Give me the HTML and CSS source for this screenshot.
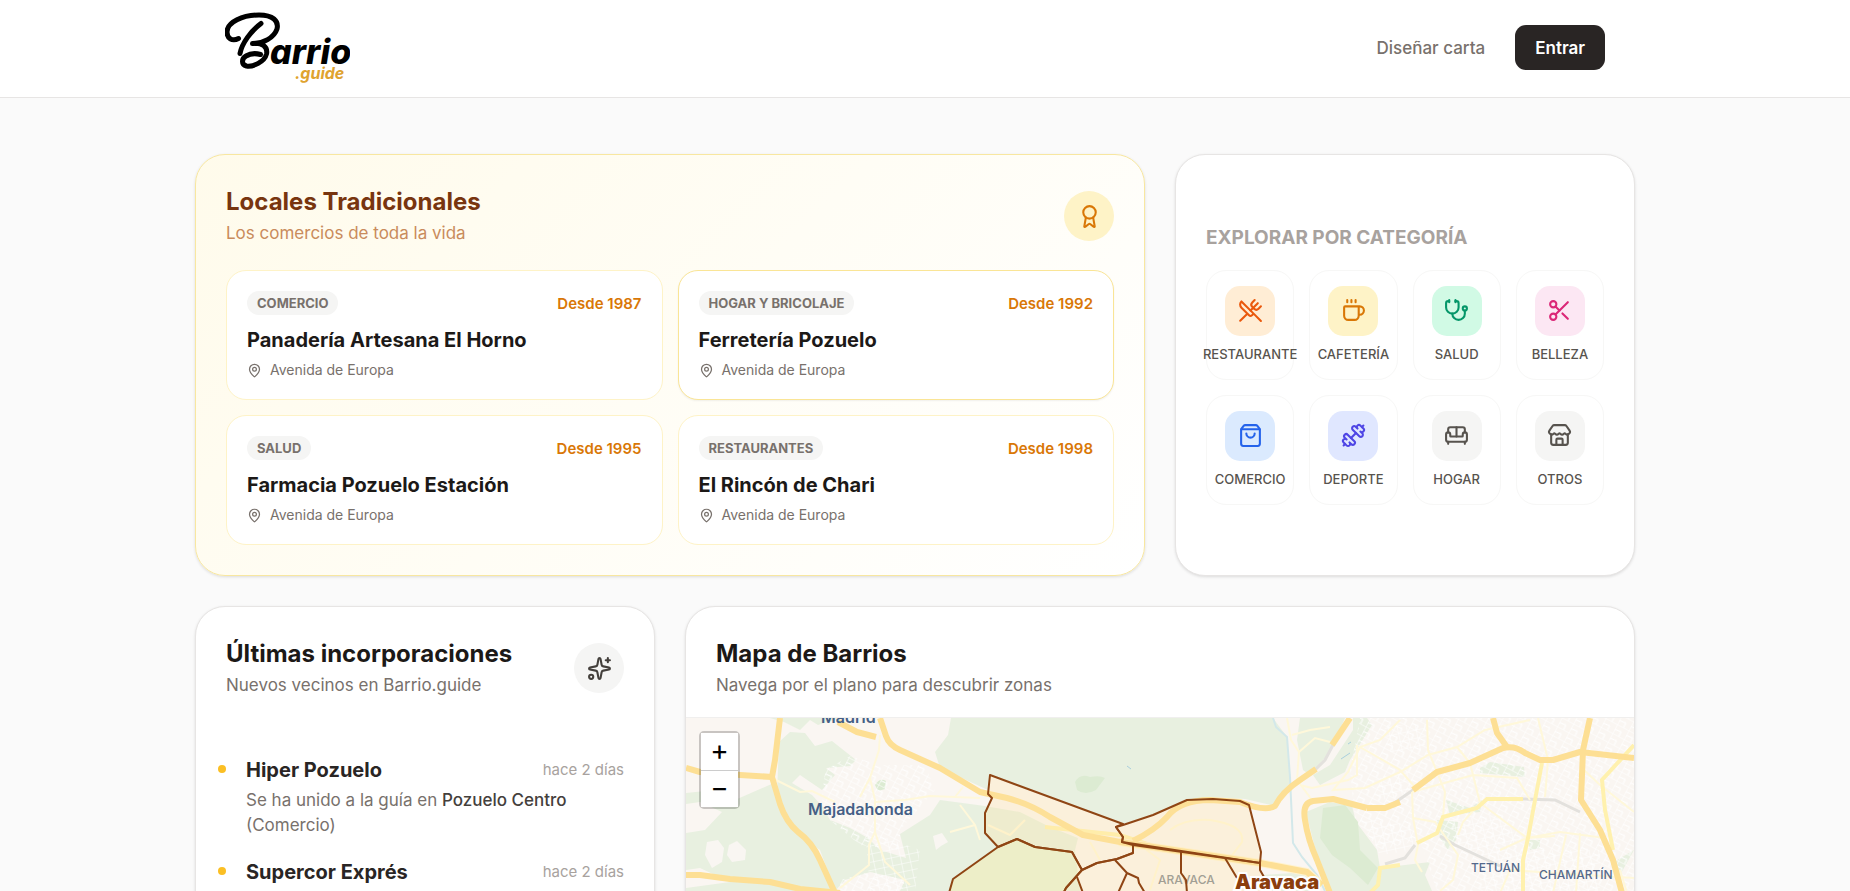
FILE: index.html
```html
<!DOCTYPE html>
<html lang="es">
<head>
<meta charset="utf-8">
<meta name="viewport" content="width=device-width, initial-scale=1">
<title>Barrio.guide</title>
<link rel="stylesheet" href="styles.css">
</head>
<body>
<svg class="sprite" aria-hidden="true">
  <symbol id="i-pin" viewBox="0 0 24 24"><path d="M20 10c0 4.993-5.539 10.193-7.399 11.799a1 1 0 0 1-1.202 0C9.539 20.193 4 14.993 4 10a8 8 0 0 1 16 0"/><circle cx="12" cy="10" r="3"/></symbol>
</svg>
<header class="site-header">
  <div class="header-inner">
    <a class="logo" href="#" aria-label="Barrio.guide">
      <svg width="125" height="75" viewBox="225 9 125 75">
        <g class="logo-mark">
          <path d="M238.500 37.500C232 41 227 37 227 31C227 21 243 14 259 14C273 14 279 20 277 28C274 37 263 42.500 252.500 42.500C262 41 268 46 266.500 53C264.500 61 253 66 246.500 65C241 63.500 241.500 57.500 246 55C251 52 257 52.500 260.500 53.500"/>
          <path d="M261 22.500C251 30 242 42 240 52.500"/>
        </g>
        <text class="logo-name" x="270" y="63">arrio</text>
        <text class="logo-tld" x="295" y="78">.guide</text>
      </svg>
    </a>
    <nav class="nav">
      <a class="nav-link" href="#">Diseñar carta</a>
      <button class="btn" type="button">Entrar</button>
    </nav>
  </div>
</header>
<div class="page">
<main class="main">
  <section class="card card-amber wide">
    <div class="card-head">
      <div>
        <h2>Locales Tradicionales</h2>
        <p class="sub">Los comercios de toda la vida</p>
      </div>
      <span class="round amber"><svg class="icon" viewBox="0 0 24 24"><path d="m15.477 12.89 1.515 8.526a.5.5 0 0 1-.81.47l-3.58-2.687a1 1 0 0 0-1.197 0l-3.586 2.686a.5.5 0 0 1-.81-.469l1.514-8.526"/><circle cx="12" cy="8" r="6"/></svg></span>
    </div>
    <div class="shops">
      <a class="shop" href="#">
        <span class="shop-top"><span class="tag">COMERCIO</span><span class="since">Desde 1987</span></span>
        <span class="shop-name">Panadería Artesana El Horno</span>
        <span class="place"><svg class="pin"><use href="#i-pin"/></svg>Avenida de Europa</span>
      </a>
      <a class="shop active" href="#">
        <span class="shop-top"><span class="tag">HOGAR Y BRICOLAJE</span><span class="since">Desde 1992</span></span>
        <span class="shop-name">Ferretería Pozuelo</span>
        <span class="place"><svg class="pin"><use href="#i-pin"/></svg>Avenida de Europa</span>
      </a>
      <a class="shop" href="#">
        <span class="shop-top"><span class="tag">SALUD</span><span class="since">Desde 1995</span></span>
        <span class="shop-name">Farmacia Pozuelo Estación</span>
        <span class="place"><svg class="pin"><use href="#i-pin"/></svg>Avenida de Europa</span>
      </a>
      <a class="shop" href="#">
        <span class="shop-top"><span class="tag">RESTAURANTES</span><span class="since">Desde 1998</span></span>
        <span class="shop-name">El Rincón de Chari</span>
        <span class="place"><svg class="pin"><use href="#i-pin"/></svg>Avenida de Europa</span>
      </a>
    </div>
  </section>

  <section class="card explore">
    <h3>EXPLORAR POR CATEGORÍA</h3>
    <div class="cats">
      <a class="cat" href="#"><span class="tile orange"><svg class="icon" viewBox="0 0 24 24"><path d="m16 2-2.300 2.300a3 3 0 0 0 0 4.200l1.800 1.800a3 3 0 0 0 4.200 0L22 8"/><path d="M15 15 3.300 3.300a4.200 4.200 0 0 0 0 6l7.300 7.300c.7.7 2 .7 2.800 0L15 15Zm0 0 7 7"/><path d="m2.100 21.800 6.400-6.300"/><path d="m19 5-7 7"/></svg></span>RESTAURANTE</a>
      <a class="cat" href="#"><span class="tile yellow"><svg class="icon" viewBox="0 0 24 24"><path d="M10 2v2"/><path d="M14 2v2"/><path d="M6 2v2"/><path d="M16 8a1 1 0 0 1 1 1v8a4 4 0 0 1-4 4H7a4 4 0 0 1-4-4V9a1 1 0 0 1 1-1h14a4 4 0 1 1 0 8h-1"/></svg></span>CAFETERÍA</a>
      <a class="cat" href="#"><span class="tile mint"><svg class="icon" viewBox="0 0 24 24"><path d="M11 2v2"/><path d="M5 2v2"/><path d="M5 3H4a2 2 0 0 0-2 2v4a6 6 0 0 0 12 0V5a2 2 0 0 0-2-2h-1"/><path d="M8 15a6 6 0 0 0 12 0v-3"/><circle cx="20" cy="10" r="2"/></svg></span>SALUD</a>
      <a class="cat" href="#"><span class="tile pink"><svg class="icon" viewBox="0 0 24 24"><circle cx="6" cy="6" r="3"/><path d="M8.120 8.120 12 12"/><path d="M20 4 8.120 15.880"/><circle cx="6" cy="18" r="3"/><path d="M14.800 14.800 20 20"/></svg></span>BELLEZA</a>
      <a class="cat" href="#"><span class="tile blue"><svg class="icon" viewBox="0 0 24 24"><path d="M16 10a4 4 0 0 1-8 0"/><path d="M3.103 6.034h17.794"/><path d="M3.400 5.467a2 2 0 0 0-.4 1.200V20a2 2 0 0 0 2 2h14a2 2 0 0 0 2-2V6.667a2 2 0 0 0-.4-1.200l-2-2.667A2 2 0 0 0 17 2H7a2 2 0 0 0-1.600.8z"/></svg></span>COMERCIO</a>
      <a class="cat" href="#"><span class="tile indigo"><svg class="icon" viewBox="0 0 24 24"><path d="M17.596 12.768a2 2 0 1 0 2.829-2.829l-1.768-1.767a2 2 0 0 0 2.828-2.829l-2.828-2.828a2 2 0 0 0-2.829 2.828l-1.767-1.768a2 2 0 1 0-2.829 2.829z"/><path d="m2.500 21.500 1.400-1.400"/><path d="m20.100 3.900 1.400-1.400"/><path d="M5.343 21.485a2 2 0 1 0 2.829-2.828l1.767 1.768a2 2 0 1 0 2.829-2.829l-6.364-6.364a2 2 0 1 0-2.829 2.829l1.768 1.767a2 2 0 0 0-2.828 2.829z"/><path d="m9.600 14.400 4.800-4.800"/></svg></span>DEPORTE</a>
      <a class="cat" href="#"><span class="tile stone"><svg class="icon" viewBox="0 0 24 24"><path d="M20 9V6a2 2 0 0 0-2-2H6a2 2 0 0 0-2 2v3"/><path d="M2 16a2 2 0 0 0 2 2h16a2 2 0 0 0 2-2v-5a2 2 0 0 0-4 0v1.500a.5.5 0 0 1-.5.5h-11a.5.5 0 0 1-.5-.5V11a2 2 0 0 0-4 0z"/><path d="M4 18v2"/><path d="M20 18v2"/><path d="M12 4v9"/></svg></span>HOGAR</a>
      <a class="cat" href="#"><span class="tile stone"><svg class="icon" viewBox="0 0 24 24"><path d="M15 21v-5a1 1 0 0 0-1-1h-4a1 1 0 0 0-1 1v5"/><path d="M17.774 10.310a1.120 1.120 0 0 0-1.549 0 2.500 2.500 0 0 1-3.451 0 1.120 1.120 0 0 0-1.548 0 2.500 2.500 0 0 1-3.452 0 1.120 1.120 0 0 0-1.549 0 2.500 2.500 0 0 1-3.770-3.248l2.889-4.184A2 2 0 0 1 7 2h10a2 2 0 0 1 1.653.873l2.895 4.192a2.500 2.500 0 0 1-3.774 3.244"/><path d="M4 10.950V19a2 2 0 0 0 2 2h12a2 2 0 0 0 2-2v-8.050"/></svg></span>OTROS</a>
    </div>
  </section>

  <section class="card">
    <div class="card-head">
      <div>
        <h2>Últimas incorporaciones</h2>
        <p class="sub">Nuevos vecinos en Barrio.guide</p>
      </div>
      <span class="round"><svg class="icon" viewBox="0 0 24 24"><path d="M11.017 2.814a1 1 0 0 1 1.966 0l1.051 5.558a2 2 0 0 0 1.594 1.594l5.558 1.051a1 1 0 0 1 0 1.966l-5.558 1.051a2 2 0 0 0-1.594 1.594l-1.051 5.558a1 1 0 0 1-1.966 0l-1.051-5.558a2 2 0 0 0-1.594-1.594l-5.558-1.051a1 1 0 0 1 0-1.966l5.558-1.051a2 2 0 0 0 1.594-1.594z"/><path d="M20 2v4"/><path d="M22 4h-4"/><circle cx="4" cy="20" r="2"/></svg></span>
    </div>
    <ul class="feed">
      <li>
        <div class="feed-top"><strong>Hiper Pozuelo</strong><time>hace 2 días</time></div>
        <p>Se ha unido a la guía en <b>Pozuelo Centro</b> (Comercio)</p>
      </li>
      <li>
        <div class="feed-top"><strong>Supercor Exprés</strong><time>hace 2 días</time></div>
      </li>
    </ul>
  </section>

  <section class="card map-card wide">
    <div class="map-head">
      <h2>Mapa de Barrios</h2>
      <p class="sub">Navega por el plano para descubrir zonas</p>
    </div>
    <div class="map">
      <svg class="map-art" viewBox="686 718 948 480" preserveAspectRatio="xMidYMin slice" role="img" aria-label="Mapa de Barrios">
        <defs>
          <pattern id="st-a" width="13" height="10" patternUnits="userSpaceOnUse" patternTransform="rotate(28)"><path class="street" d="M0 0H13M0 0V10M0 6L7 5V10"/></pattern>
          <pattern id="st-b" width="9" height="8" patternUnits="userSpaceOnUse" patternTransform="rotate(-12)"><path class="street" d="M0 0H9M0 0V8"/></pattern>
        </defs>
        <rect class="land" x="686" y="718" width="948" height="480"/>
        <g class="green">
          <path d="M951 718L948 735L935 752L940 768L988 790L990 775L1123 824L1153 815L1187 800L1213 797L1245 799L1275 806L1290 790V777L1287 737L1273 718Z"/>
          <path d="M779 742L790 732L805 733L815 746L832 741L856 760L850 766L826 768L835 775L822 790L800 775L792 783L812 795L822 806L830 820L850 828L868 838L880 850L906 858L900 834L930 815L940 800L985 806L1020 812L1050 827L1078 838L1075 850L1080 891H900L905 880L870 872L845 880L835 891L820 850L790 830L777 795Z"/>
          <path d="M686 793L715 790L735 800L776 782L790 825L812 845L833 891H686V888L730 882L700 868L686 870V833L705 830L722 812L700 802L686 804Z"/>
          <path d="M770 718H840L818 725L810 720L800 730L784 722Z"/>
          <path d="M1300 718H1345L1330 752L1310 775L1303 770L1297 740Z"/>
          <path d="M1353 730V718H1367L1372 725L1350 760L1345 772L1320 785L1313 775L1330 765Z"/>
          <path d="M1306 812L1330 802L1352 806L1356 822L1377 850L1380 868L1430 862L1425 875L1432 891H1330L1318 860Z"/>
          <path d="M1480 768L1490 762L1524 767L1525 777L1480 773Z"/>
          <path d="M1437 820L1458 822L1456 840L1448 850L1440 838Z"/>
          <path d="M1446 800L1470 808L1482 800L1480 812L1450 815Z"/>
          <path d="M1528 840H1540V848L1530 850Z"/>
          <path d="M1634 850L1614 862L1620 875Z"/>
          <path d="M1262 875L1307 872L1320 891H1268Z"/>
        </g>
        <g class="green-dark">
          <path d="M1075 782Q1080 773 1090 777Q1100 775 1105 778L1096 790Q1085 796 1077 790Z"/>
          <path d="M1323 808L1345 805L1358 822L1360 850L1378 868L1368 885L1350 868L1332 855L1320 838Z"/>
          <path d="M875 785Q880 777 886 781L885 789L878 791Z"/>
        </g>
        <g class="patch">
          <path d="M707 842L718 840L724 848L722 862L712 868L705 855Z"/>
          <path d="M729 845L737 841L746 850L745 860L732 862L727 855Z"/>
          <path d="M933 836L942 833L948 842L941 846L936 850Z"/>
        </g>
        <g fill="url(#st-a)">
          <path d="M825 770L850 756L880 765L925 765L935 790L900 830L900 850L860 845L830 820L822 800Z"/>
          <path d="M1360 718H1634V900H1440L1420 840L1380 850L1355 820L1350 770Z"/>
          <path d="M840 880L870 872L905 880L900 900H840Z"/>
        </g>
        <g fill="url(#st-b)">
          <path d="M865 830L920 850L915 891H870Z"/>
          <path d="M1360 818L1410 825L1415 850L1380 855Z"/>
          <path d="M1384 725H1425V750L1390 752Z"/>
          <path d="M1375 780L1410 770V795L1380 800Z"/>
          <path d="M1480 850H1600V893H1480Z"/>
          <path d="M1450 820L1500 815L1520 840L1500 850L1455 850Z"/>
        </g>
        <path class="river" d="M1273 718L1276 727L1287 737L1290 777L1293 843L1302 857L1317 875L1325 891"/>
        <path class="lake" d="M1341 759L1350 753M1348 744L1351 742M1127 766L1131 769"/>
        <g class="rail"><path d="M1313 772L1325 760L1333 745M1390 806L1413 790L1437 772M1523 799L1555 800L1580 812M1385 864L1405 858L1415 845M1440 836L1455 845L1500 866"/></g>
        <g class="minor">
          <path d="M880 735L879 750L870 778L875 800V832L869 845V865L840 888M870 778L860 797M875 802L905 800L930 796L980 798M963 787L955 797M875 832L885 862L910 885M770 777L800 792L812 791L835 802"/>
          <path d="M1287 718L1291 740L1299 752L1297 780L1312 800M1292 735L1310 730L1330 727M1299 752L1315 738L1330 742M1357 745V775L1348 780L1312 788L1300 785"/>
          <path d="M1400 720L1380 740L1360 747L1348 772L1333 790L1365 788L1400 772L1428 755L1457 747L1485 730L1530 720M1360 747L1400 770L1415 787M1427 720L1428 750L1437 772L1445 792L1443 817M1457 747L1470 763L1480 803L1527 838L1560 832L1605 838M1412 792L1473 775L1517 778L1530 800M1538 718L1548 760L1545 797M1412 792L1413 818L1435 822L1458 855L1453 880L1440 891M1413 818L1418 845L1415 860L1422 872M1480 803L1463 822L1458 835M1584 770L1600 785L1634 812M1566 835L1553 893M1580 833L1576 893M1500 850L1527 838L1555 836M1500 893L1510 870L1634 878M1627 893L1620 870"/>
          <path d="M960 805L975 825L980 840M975 825L950 832M1025 820L1010 835L988 825M1170 830Q1185 818 1210 820Q1245 825 1242 842L1230 858M1090 842L1100 860M1140 845L1160 860L1150 890"/>
        </g>
        <g class="mid">
          <path d="M1634 745L1602 780L1605 810L1613 850"/>
          <path d="M1542 763L1535 800L1528 838L1523 860V893"/>
          <path d="M1523 799H1487L1477 808L1443 817L1437 833L1417 843M1400 865L1380 868L1378 885L1370 893"/>
          <path d="M1045 827L1120 835L1150 845"/>
        </g>
        <g class="road-case"><path d="M1119 842L1260 863L1307 872L1322 885"/></g>
        <g class="road">
          <path d="M780 718L775 760L772 777L780 804Q786 822 798 832Q812 842 820 860L835 893"/>
          <path d="M686 768L700 772L740 775L772 777"/>
          <path d="M880 718L886 736Q889 745 900 750L940 768L980 792L1007 798Q1030 804 1050 817L1083 835L1120 842L1260 863L1307 872L1322 885"/>
          <path d="M838 722L857 732L876 737"/>
          <path d="M686 875H700L730 879L770 882L800 889L840 893"/>
          <path d="M1133 841Q1155 830 1167 817Q1180 800 1210 800L1240 802Q1265 812 1275 806Q1282 792 1300 780L1316 769M1332 745L1350 718"/>
          <path d="M1367 808L1333 799L1313 801Q1302 803 1305 820Q1308 840 1317 860L1330 893"/>
          <path d="M1367 808L1385 808L1400 802M1413 790L1437 772L1470 763L1503 748Q1515 745 1525 753L1540 760H1553L1580 752L1634 758"/>
          <path d="M1493 718L1497 733L1507 747"/>
          <path d="M1590 718L1583 750L1581 800L1600 830L1613 860L1622 893"/>
        </g>
        <text class="town" x="808" y="815">Majadahonda</text>
        <text class="town" x="821" y="723">Madrid</text>
        <text class="district" x="1471" y="872">TETUÁN</text>
        <text class="district" x="1539" y="879">CHAMARTÍN</text>
        <text class="district soft" x="1158" y="884">ARAVACA</text>
        <g class="zone">
          <path d="M990 775L1123 824L1116 827L1123 837L1122 842L1133 845V853L1117 859L1097 863L1082 870L1072 852L1035 847L1017 839L998 847L985 833V813L992 798L988 794Z"/>
          <path class="olive" d="M998 847L953 879L947 900H1060L1066 888L1082 870L1072 852L1035 847L1017 839Z"/>
          <path d="M1123 825L1153 815L1187 800L1213 799L1240 801L1249 805L1261 852L1260 863L1122 842L1123 837L1116 827Z"/>
          <path d="M1133 845L1260 863V870L1268 884L1270 900H1060L1066 888L1082 870L1097 863L1117 859L1133 853Z"/>
          <path class="line" d="M1181 852V873L1186 880L1187 893M1225 858L1237 878M1115 860L1127 873L1118 893M1127 873L1138 878L1139 883L1145 893M1077 877L1083 893"/>
        </g>
        <text class="zone-name" x="1235" y="889">Aravaca</text>
      </svg>
      <div class="zoom">
        <button type="button" aria-label="Acercar">+</button>
        <button type="button" aria-label="Alejar">−</button>
      </div>
    </div>
  </section>
</main>
</div>
</body>
</html>
```
FILE: styles.css
```css
* { box-sizing: border-box; }
body {
  margin: 0;
  height: 100vh;
  overflow: hidden;
  background: #fafafa;
  color: #1c1917;
  font-family: Inter, "Liberation Sans", sans-serif;
  font-size: 17px;
}
a { color: inherit; text-decoration: none; }
h2, h3, p, ul { margin: 0; padding: 0; }
svg { display: block; }
.sprite { position: absolute; width: 0; height: 0; }

.site-header, .page { padding-right: 20px; }

.site-header { background: #fff; border-bottom: 1px solid #e7e5e4; }
.header-inner {
  max-width: 1440px;
  height: 97px;
  margin: 0 auto;
  padding: 0 30px 2px;
  display: flex;
  align-items: center;
  justify-content: space-between;
}
.logo-mark path { fill: none; stroke: #000; stroke-width: 5; stroke-linecap: round; stroke-linejoin: round; }
.logo-name { font-size: 34px; font-weight: 800; font-style: italic; }
.logo-tld { font-size: 16px; font-weight: 700; font-style: italic; fill: #dfa32f; }
.nav { display: flex; align-items: center; gap: 30px; }
.nav-link { color: #78716c; font-weight: 500; }
.btn {
  border: 0;
  border-radius: 11px;
  padding: 0 20px;
  height: 45px;
  background: #292524;
  color: #fff;
  font: inherit;
  font-weight: 600;
}

.main {
  max-width: 1440px;
  margin: 0 auto;
  padding-top: 56px;
  display: grid;
  grid-template-columns: repeat(3, 1fr);
  gap: 30px;
}
.wide { grid-column: span 2; }
.card {
  background: #fff;
  border: 1px solid #e7e5e4;
  border-radius: 30px;
  padding: 30px;
  box-shadow: 0 1px 3px rgba(0, 0, 0, .12);
}
.card-amber { background: linear-gradient(135deg, #fffbeb, #fff); border-color: #f8e7a0; }
.card-amber h2 { color: #78350f; }
.card-amber .sub { color: #c98b5c; }
.card-head { display: flex; align-items: center; justify-content: space-between; }
h2 { font-size: 24px; line-height: 34px; font-weight: 700; }
.sub { line-height: 28px; color: #78716c; }
.round {
  width: 50px;
  height: 50px;
  border-radius: 50%;
  background: #f5f5f4;
  color: #44403c;
  display: grid;
  place-items: center;
}
.round.amber { background: #fef3c7; color: #d97706; }
.icon, .pin { fill: none; stroke: currentColor; stroke-width: 2; stroke-linecap: round; stroke-linejoin: round; }
.icon { width: 25px; height: 25px; }
.pin { width: 15px; height: 15px; }

.shops { display: grid; grid-template-columns: 1fr 1fr; gap: 15px; margin-top: 23px; }
.shop {
  display: flex;
  flex-direction: column;
  background: #fff;
  border: 1px solid #fef3c7;
  border-radius: 20px;
  padding: 20px 20px 18px;
}
.shop.active { border-color: #fae596; box-shadow: 0 1px 2px rgba(0, 0, 0, .06); }
.shop-top { display: flex; align-items: center; justify-content: space-between; }
.tag {
  padding: 0 10px;
  border-radius: 12px;
  background: #f5f5f4;
  color: #78716c;
  font-size: 13px;
  line-height: 24px;
  font-weight: 700;
}
.since { color: #d97706; font-size: 15px; font-weight: 600; }
.shop-name { margin-top: 10px; font-size: 20px; line-height: 30px; font-weight: 700; }
.place {
  display: flex;
  align-items: center;
  gap: 8px;
  margin-top: 4px;
  color: #78716c;
  font-size: 14px;
  line-height: 22px;
}

.explore { display: flex; flex-direction: column; justify-content: center; }
h3 { color: #a8a29e; font-size: 19px; line-height: 24px; font-weight: 700; }
.cats { display: grid; grid-template-columns: repeat(4, minmax(0, 1fr)); gap: 15px; margin-top: 20px; }
.cat {
  display: flex;
  flex-direction: column;
  align-items: center;
  gap: 8px;
  padding: 15px 0;
  border: 1px solid #f7f7f6;
  border-radius: 20px;
  color: #57534e;
  font-size: 13px;
  line-height: 20px;
  font-weight: 500;
}
.tile { width: 50px; height: 50px; border-radius: 15px; display: grid; place-items: center; }
.orange { background: #ffedd5; color: #ea580c; }
.yellow { background: #fef3c7; color: #d97706; }
.mint { background: #d1fae5; color: #059669; }
.pink { background: #fce7f3; color: #db2777; }
.blue { background: #dbeafe; color: #2563eb; }
.indigo { background: #e0e7ff; color: #4f46e5; }
.stone { background: #f5f5f4; color: #57534e; }

.feed { list-style: none; margin-top: 56px; display: grid; gap: 19px; }
.feed li { position: relative; padding-left: 20px; }
.feed li::before {
  content: "";
  position: absolute;
  left: -8px;
  top: 10px;
  width: 8px;
  height: 8px;
  border-radius: 50%;
  background: #fbbf24;
}
.feed-top { display: flex; align-items: center; justify-content: space-between; line-height: 30px; }
.feed-top strong { color: #292524; font-size: 20px; font-weight: 700; }
.feed-top time { color: #a8a29e; font-size: 15px; }
.feed p { color: #78716c; line-height: 25px; padding-top: 3px; }
.feed b { color: #44403c; font-weight: 500; }

.map-card { padding: 0; overflow: hidden; }
.map-head { padding: 30px 30px 18px; border-bottom: 1px solid #f0efee; }
.map { position: relative; height: 480px; overflow: hidden; }
.map-art { width: 100%; height: 100%; }
.zoom {
  position: absolute;
  left: 13px;
  top: 13px;
  display: flex;
  flex-direction: column;
  border: 2px solid rgba(0, 0, 0, .2);
  border-radius: 5px;
  background-clip: padding-box;
}
.zoom button {
  width: 37px;
  height: 37px;
  padding: 0 0 4px;
  border: 0;
  background: #fff;
  color: #000;
  font-size: 28px;
  line-height: 32px;
  font-weight: 400;
  font-family: inherit;
}
.zoom button + button { border-top: 1px solid #ccc; }

.land { fill: #faf6f2; }
.green { fill: #e8f0e0; }
.green-dark { fill: #dcebd2; }
.patch { fill: #f9f6f2; }
.street { fill: none; stroke: #fff; stroke-width: 1; }
.river { fill: none; stroke: #d3e8ea; stroke-width: 2; }
.lake { fill: none; stroke: #a9cfdd; stroke-width: 1; }
.rail { fill: none; stroke: #e3e1dd; stroke-width: 3; }
.minor { fill: none; stroke: #fff8da; stroke-width: 2; }
.mid { fill: none; stroke: #fff1ae; stroke-width: 4; }
.road-case { fill: none; stroke: #fff3d0; stroke-width: 8; }
.road { fill: none; stroke: #fddf94; stroke-width: 6; stroke-linejoin: round; }
.zone path { fill: rgba(255, 225, 160, .28); stroke: #8f4514; stroke-width: 2; stroke-linejoin: round; }
.zone .olive { fill: rgba(250, 230, 130, .26); }
.zone .line { fill: none; }
.town { fill: #455f86; font-size: 16px; font-weight: 600; }
.district { fill: #54698c; font-size: 12px; font-weight: 500; }
.soft { fill: #7d858f; }
.zone-name {
  fill: #8b3d0c;
  font-size: 20px;
  font-weight: 900;
  stroke: #fff;
  stroke-width: 4;
  paint-order: stroke;
}
```
